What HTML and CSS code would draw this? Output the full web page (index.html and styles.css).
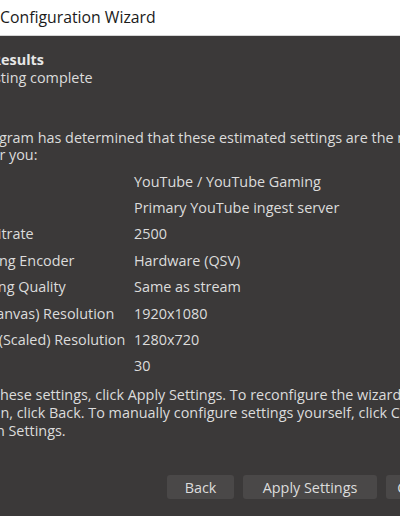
FILE: index.html
```html
<!DOCTYPE html>
<html lang="en">

<head>
    <meta charset="utf-8" />
    <title>Auto-Configuration Wizard</title>
    <link rel="stylesheet" href="styles.css">
</head>

<body>
    <div class="window">
        <!-- title bar -->
        <div class="titlebar">
            <span class="title-text">Configuration Wizard</span>
        </div>

        <!-- wizard page -->
        <div class="wizard">
            <div class="page-head">
                <div class="page-title">Final Results</div>
                <div class="page-subtitle">Testing complete</div>
            </div>

            <div class="intro">
                <div>The program has determined that these estimated settings are the most ideal</div>
                <div>ideal for you:</div>
            </div>

            <div class="settings">
                <div class="label">Service</div>
                <div class="value">YouTube / YouTube Gaming</div>
                <div class="label">Server</div>
                <div class="value">Primary YouTube ingest server</div>
                <div class="label">Video Bitrate</div>
                <div class="value">2500</div>
                <div class="label">Streaming Encoder</div>
                <div class="value">Hardware (QSV)</div>
                <div class="label">Recording Quality</div>
                <div class="value">Same as stream</div>
                <div class="label">Base (Canvas) Resolution</div>
                <div class="value">1920x1080</div>
                <div class="label">Output (Scaled) Resolution</div>
                <div class="value">1280x720</div>
                <div class="label">FPS</div>
                <div class="value">30</div>
            </div>

            <div class="outro">
                <div>To use these settings, click Apply Settings. To reconfigure the wizard and</div>
                <div>try again, click Back. To manually configure settings yourself, click Cancel</div>
                <div>and open Settings.</div>
            </div>

            <!-- wizard buttons -->
            <div class="buttons">
                <button class="btn btn-back">Back</button>
                <button class="btn btn-apply">Apply Settings</button>
                <button class="btn btn-cancel">Cancel</button>
            </div>
        </div>
    </div>
</body>
</html>
```

FILE: styles.css
```css
html,
body {
    margin: 0;
    padding: 0;
}

body {
    width: 400px;
    height: 516px;
    overflow: hidden;
    background-color: #3b3939;
    font-family: "Open Sans", "Noto Sans", sans-serif;
}

.window {
    width: 400px;
    height: 516px;
    overflow: hidden;
}

.titlebar {
    height: 35px;
    background-color: #ffffff;
    border-bottom: 1px solid #d4d4d4;
    display: flex;
    align-items: center;
}

.title-text {
    font-size: 15.8px;
    color: #1b1b1b;
    white-space: nowrap;
    margin-top: -1px;
}

.wizard {
    margin-left: -53px;
    width: 600px;
    color: #dcdcdc;
    font-size: 14.4px;
    white-space: nowrap;
}

.page-head {
    padding-top: 15px;
}

.page-title {
    font-weight: bold;
    color: #e6e6e6;
    line-height: 18px;
    padding-left: 6px;
}

.page-subtitle {
    padding-left: 31px;
    line-height: 18px;
}

.intro {
    margin-top: 42px;
    line-height: 17px;
}

.intro div + div {
    padding-left: 3px;
}

.settings {
    display: grid;
    grid-template-columns: 187px auto;
    grid-auto-rows: 26.4px;
    align-items: center;
    margin-top: 5px;
}

.outro {
    margin-top: 7px;
    line-height: 18px;
}

.outro div:nth-child(2) {
    padding-left: 4px;
}

.outro div:nth-child(3) {
    margin-left: -6px;
}

.buttons {
    display: flex;
    gap: 9px;
    margin-top: 35px;
    padding-left: 220px;
}

.btn {
    height: 24px;
    padding: 0;
    border: none;
    border-radius: 3px;
    background-color: #4a4848;
    color: #dcdcdc;
    font-family: inherit;
    font-size: 14.4px;
}

.btn-back {
    width: 67px;
}

.btn-apply {
    width: 134px;
}

.btn-cancel {
    width: 67px;
}
```
